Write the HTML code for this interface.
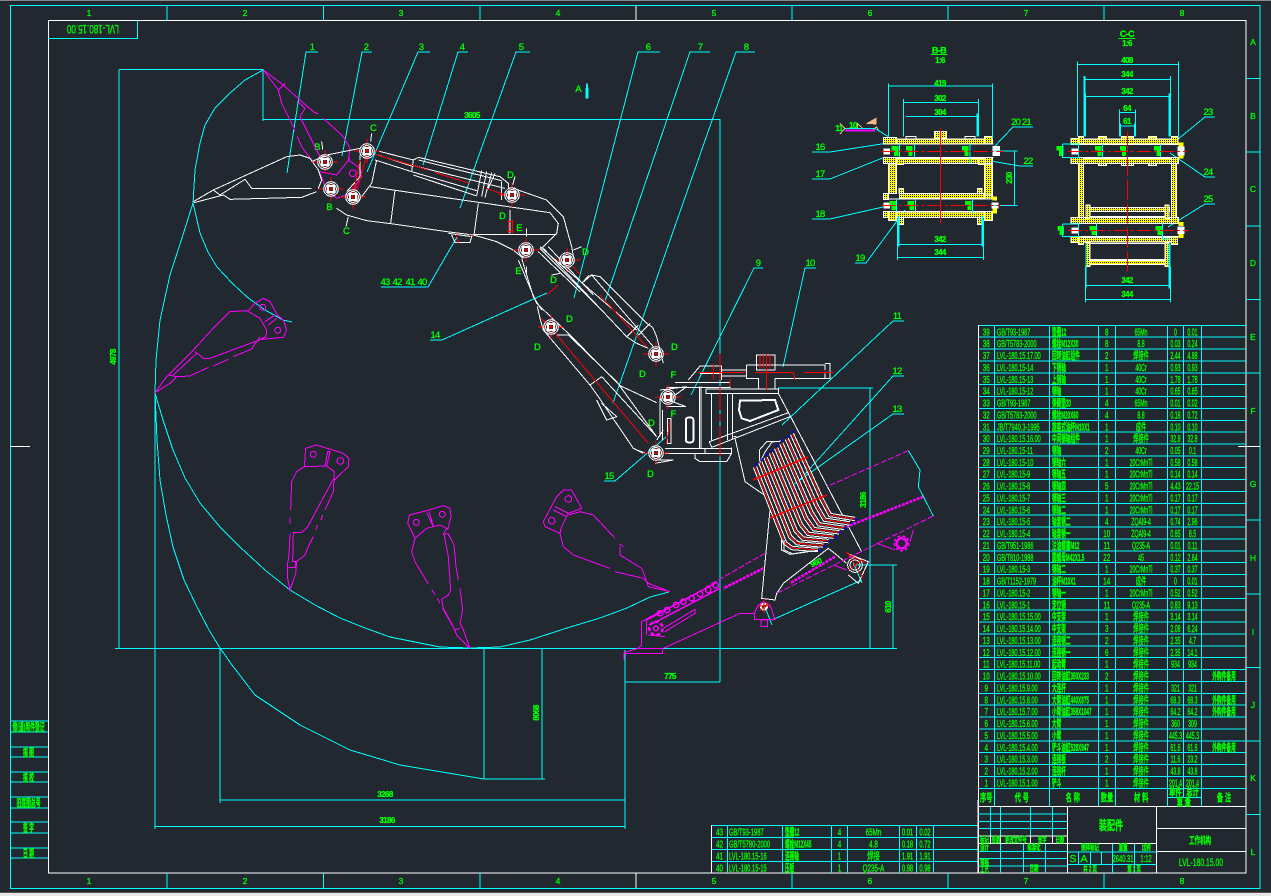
<!DOCTYPE html>
<html><head><meta charset="utf-8"><title>LVL-180.15.00</title>
<style>
html,body{margin:0;padding:0;background:#212830;overflow:hidden}
svg{display:block;shape-rendering:crispEdges}
svg *{vector-effect:non-scaling-stroke}
text{fill:#0f0;stroke:#0f0;stroke-width:.3;font:10.5px "Liberation Sans","Noto Sans CJK SC",sans-serif}
.mid text,text.mid{text-anchor:middle}
.b text,text.b{font-weight:bold}
.s{font-size:8px;font-weight:bold;text-anchor:middle;letter-spacing:-.6px}
.l{font-size:9.5px;text-anchor:middle;letter-spacing:-.8px}
.n{font-size:8.5px;text-anchor:middle}
.w{stroke:#fff;fill:none}
.c{stroke:#0ff;fill:none}
.r{stroke:#f00;fill:none}
.rd{stroke:#f00;fill:none;stroke-dasharray:14 3 3 3}
.m{stroke:#f0f;fill:none}
.md{stroke:#f0f;fill:none;stroke-dasharray:6 2}
.th{stroke:#f0f;fill:none;stroke-width:2.5;stroke-dasharray:3 1}
.h{fill:url(#h);stroke:#fff}
.gf{fill:#0f0;stroke:none}
</style></head><body>
<svg xmlns="http://www.w3.org/2000/svg" width="1271" height="896" viewBox="0 0 1271 896">
<defs>
<pattern id="h" width="6" height="6" patternUnits="userSpaceOnUse"><rect width="6" height="6" fill="#ffff00"/><rect width="3" height="3" fill="#2a2c20"/></pattern>
<g id="pin"><path d="M-13 0H13M0-12V12" class="r"/><circle r="7.3" class="w"/><circle r="5.4" class="w"/><rect x="-3.5" y="-3.5" width="7" height="7" class="w"/><rect x="-2.5" y="-2.5" width="5" height="5" class="w"/></g>
<path id="pp" fill="none" d="M755 467L785 543 792 548 818 550M760.3 462.3L790.3 536.9 797.4 543.3 823.3 545.6M765.6 457.6L795.6 530.7 802.9 538.6 828.6 541.1M770.9 452.9L800.9 524.6 808.3 533.9 833.9 536.7M776.1 448.1L806.1 518.4 813.7 529.1 839.1 532.3M781.4 443.4L811.4 512.3 819.1 524.4 844.4 527.9M786.7 438.7L816.7 506.1 824.6 519.7 849.7 523.4M792 434L822 500 830 515 855 519"/>
</defs>
<rect width="1271" height="896" fill="#212830"/>
<rect width="1271" height="1" fill="#8a8a8a"/>
<rect y="892" width="1271" height="1" fill="#555"/><rect y="893" width="1271" height="3" fill="#e6e6e6"/>

<!-- frame -->
<rect x="10.5" y="5.5" width="1249.5" height="883" class="c"/>
<rect x="48.5" y="20.5" width="1197.5" height="852.5" class="w"/>
<path class="c" d="M167 5V20M323.5 5V20M480 5V20M792 5V20M948 5V20M1104 5V20M167 873V888M323.5 873V888M480 873V888M792 873V888M948 873V888M1104 873V888M1246 78.5H1260M1246 152H1260M1246 226H1260M1246 299.5H1260M1246 373H1260M1246 520H1260M1246 594H1260M1246 667.5H1260M1246 741H1260M1246 814.5H1260"/>
<path class="w" d="M636 5V20M636 873V888M10 446.5H30M1238 446.5H1260"/>
<g class="n"><text class="n" x="89" y="16">1</text><text class="n" x="245" y="16">2</text><text class="n" x="401" y="16">3</text><text class="n" x="558" y="16">4</text><text class="n" x="714" y="16">5</text><text class="n" x="870" y="16">6</text><text class="n" x="1026" y="16">7</text><text class="n" x="1182" y="16">8</text>
<text class="n" x="89" y="884">1</text><text class="n" x="245" y="884">2</text><text class="n" x="401" y="884">3</text><text class="n" x="558" y="884">4</text><text class="n" x="714" y="884">5</text><text class="n" x="870" y="884">6</text><text class="n" x="1026" y="884">7</text><text class="n" x="1182" y="884">8</text>
<text class="n" x="1253" y="45">A</text><text class="n" x="1253" y="119">B</text><text class="n" x="1253" y="192">C</text><text class="n" x="1253" y="266">D</text><text class="n" x="1253" y="340">E</text><text class="n" x="1253" y="414">F</text><text class="n" x="1253" y="487">G</text><text class="n" x="1253" y="561">H</text><text class="n" x="1253" y="635">I</text><text class="n" x="1253" y="708">J</text><text class="n" x="1253" y="781">K</text><text class="n" x="1253" y="855">L</text></g>

<!-- top-left stamp -->
<path class="c" d="M48 38.5H137.5V20.5"/>
<g transform="translate(93,29.5) rotate(180) scale(.67,1)"><text class="mid" y="4.5" x="0" style="font-size:12px">LVL-180.15.00</text></g>

<!-- left strip -->
<path class="c" d="M10 721H48M10 732H48M10 747H48M10 757H48M10 772H48M10 782H48M10 797H48M10 808H48M10 822H48M10 833H48M10 848H48M10 858H48"/>
<g class="mid b" transform="translate(28.5,0) scale(.46,1)"><text y="730.5">借(通)用件登记</text><text y="756">描 图</text><text y="781">描 校</text><text y="806.5">旧底图总号</text><text y="831.5">签 字</text><text y="857">日 期</text></g>

<!-- main cyan dims -->
<path class="c" d="M119 69.5H263V121M119 69.5V648M263 119.5H720V682M625 682H720M625 650V829M115 648.5H897M155 390V829M155 826.5H625M220 648V803M220 800H625M484 648V779M484 779H545M542 648V779M778 388H873M870 388V648M853 565H897M893 565V648"/>
<!-- arcs -->
<g class="c">
<polyline points="263,70 245,80 230,93 215,108 205,125 200,143 195,170 193,203 182,238 170,275 160,320 156,360 155,393 157,440 160,480 166,515 173,547 184,580 197,607 209,630 220,648 232,665 255,695 300,725 350,750 400,765 484,779"/>
<polyline points="193,203 197,220 200,233 208,252 217,267 232,283 247,297 265,310 283,320 292,322"/>
<polyline points="155,393 163,420 173,450 185,478 200,503 220,527 240,547 265,570 290,590 315,605 340,618 365,628 390,637 415,642 440,647 470,648 500,647 530,640 567,628 600,618 627,608 650,597 669,592"/>
<polyline points="772,620 862,580"/>
<polyline points="765,607 772,625"/>
<polyline points="853,562 862,583"/>
<!-- leaders -->
<polyline points="287,173 306,52 318,52"/><polyline points="342,156 362,52 372,52"/><polyline points="367,172 418,52 430,52"/><polyline points="423,165 458,52 468,52"/><polyline points="460,208 516,52 530,52"/>
<polyline points="574,298 638,52 660,52"/><polyline points="605,301 690,52 710,52"/><polyline points="613,403 736,52 755,52"/>
<polyline points="691,395 754,268 763,268"/><polyline points="783,367 805,268 816,268"/><polyline points="782,425 893,321 904,321"/><polyline points="797,483 893,376 904,376"/><polyline points="793,485 893,414 904,414"/>
<polyline points="430,340 442,340 547,293"/><polyline points="604,481 615,481 666,437"/><polyline points="381,287 428,287 457,237"/>
<polyline points="812,152 830,152 888,143"/><polyline points="812,179 830,179 885,157"/><polyline points="812,219 830,219 883,207"/><polyline points="855,263 866,263 905,210"/>
<polyline points="1033,127 1013,127 993,148"/><polyline points="1033,166 1020,166 973,158"/><polyline points="1215,117 1205,117 1177,140"/><polyline points="1215,177 1205,177 1170,153"/><polyline points="1215,204 1205,204 1168,227"/>
</g>
<!-- dim/leader text -->
<g>
<text class="l" x="312" y="50">1</text><text class="l" x="366" y="50">2</text><text class="l" x="421" y="50">3</text><text class="l" x="462" y="50">4</text><text class="l" x="521" y="50">5</text><text class="l" x="648" y="50">6</text><text class="l" x="700" y="50">7</text><text class="l" x="746" y="50">8</text>
<text class="l" x="758" y="266">9</text><text class="l" x="810" y="266">10</text><text class="l" x="897" y="319">11</text><text class="l" x="897" y="374">12</text><text class="l" x="897" y="412">13</text><text class="l" x="435" y="338">14</text><text class="l" x="609" y="479">15</text>
<text class="l" x="385" y="285">43</text><text class="l" x="397" y="285">42</text><text class="l" x="410" y="285">41</text><text class="l" x="422" y="285">40</text>
<text class="l" x="820" y="150">16</text><text class="l" x="820" y="177">17</text><text class="l" x="820" y="217">18</text><text class="l" x="860" y="261">19</text><text class="l" x="1021" y="125">20 21</text><text class="l" x="1028" y="164">22</text><text class="l" x="1208" y="115">23</text><text class="l" x="1208" y="175">24</text><text class="l" x="1208" y="202">25</text>
<text class="s" x="472" y="118">3605</text><text class="s" x="670" y="679">775</text><text class="s" x="385" y="797">3268</text><text class="s" x="387" y="823">3186</text>
<text class="s" transform="translate(116,357) rotate(-90)">4978</text><text class="s" transform="translate(539,713) rotate(-90)">8068</text><text class="s" transform="translate(866,500) rotate(-90)">3186</text><text class="s" transform="translate(891,607) rotate(-90)">610</text><text class="s" transform="translate(817,565) rotate(-25)">960</text>
<text class="l" x="578" y="92">A</text>
<text class="l" x="373" y="131">C</text><text class="l" x="317" y="150">B</text><text class="l" x="329" y="210">B</text><text class="l" x="346" y="234">C</text><text class="l" x="510" y="178">D</text><text class="l" x="502" y="219">D</text><text class="l" x="519" y="231">E</text><text class="l" x="518" y="274">E</text><text class="l" x="585" y="255">D</text><text class="l" x="553" y="283">D</text><text class="l" x="569" y="322">D</text><text class="l" x="537" y="350">D</text><text class="l" x="674" y="350">D</text><text class="l" x="642" y="377">D</text><text class="l" x="673" y="378">F</text><text class="l" x="673" y="417">F</text><text class="l" x="651" y="426">D</text><text class="l" x="650" y="477">D</text>
</g>
<path d="M587 83L588 90V98L586 98V90Z" fill="#0ff" stroke="#0ff"/>

<!-- arm: zoom3 coords -->
<g transform="translate(180,60) scale(.33333)">
<g class="m">
<polyline points="250,30 310,75 360,120 400,155"/><polyline points="400,155 415,162" /><polyline points="430,175 490,230 510,265 505,300 540,325 545,350 525,380"/>
<polyline points="250,30 295,90 305,130 340,200 345,215"/><polyline points="352,230 365,260 395,300"/><polyline points="295,90 315,70"/>
<polyline points="360,170 375,145 355,125"/><polyline points="360,170 395,240 420,290"/>
<polyline points="420,340 440,390 470,415 510,400 530,380"/><polyline points="420,335 470,345 510,295"/>
<circle cx="518" cy="340" r="10"/>
</g>
<g class="w">
<polyline points="40,425 100,390 320,290 360,285 390,295 415,330 425,360 415,385"/>
<polyline points="42,428 130,405 150,418 365,412 410,395"/>
<polyline points="100,390 120,405 195,358 215,385 395,385"/>
<polyline points="395,305 440,285 540,265"/>
<polyline points="590,300 575,370 530,430"/><polyline points="540,285 540,350 500,395"/>
<polyline points="470,445 500,465 560,482 640,492 800,515 880,525 950,545 1000,570 1030,595"/>
<polyline points="570,380 1110,458 1135,490 1130,520 1085,565"/>
<path d="M880,523H1130M645,390L632,490M895,430L882,525"/>
<path d="M590,272L700,300M595,285L700,320M585,300L695,335"/>
<polyline points="695,335 700,300 715,292 960,350 985,370 985,385"/>
<path d="M695,335L890,392M700,345L890,408M715,300L965,362M705,318L975,385"/>
<path d="M905,332L890,408M920,335L905,410M935,338L915,412M945,340L925,385M965,365L965,420"/>
<polyline points="1000,385 1100,420 1150,470 1175,560 1183,605"/>
<polyline points="805,520 875,530 870,547 825,547 815,525"/>
<path d="M1040,505V530M1040,620V640M990,450V520M425,245L428,268M505,470L498,500M575,220L572,245M1005,350L998,375"/>
<polyline points="1025,595 1060,710 1085,750"/>
<path d="M1080,565L1260,745M1075,575L1200,695M1105,560L1240,705M1140,640L1115,645M1180,570L1205,560"/>
</g>
<g class="r">
<path d="M585,283L745,330M765,338L870,370M920,385L990,410M560,285L530,395M540,300L520,400M985,478V520M997,478V520M982,485H1000M982,515H1000M1100,705L1135,675M830,520L835,550M870,522L872,530"/>
</g>
</g>
<use href="#pin" x="325" y="162"/><use href="#pin" x="331" y="189"/><use href="#pin" x="367" y="151"/><use href="#pin" x="353" y="197"/><use href="#pin" x="512" y="195"/><use href="#pin" x="526" y="250"/><use href="#pin" x="567" y="260"/>

<!-- boom/frame/conveyor: zoom4 coords -->
<g transform="translate(500,240) scale(.33333)">
<g class="w">
<polyline points="55,60 110,190 210,285 360,437 470,488"/>
<polyline points="245,130 275,105 300,110 440,250 458,262 470,290 490,370"/>
<path d="M130,25L380,290 410,310 445,325M120,20L410,270M275,105L460,320M245,130L268,105M380,290L415,255M415,285L450,250"/>
<polyline points="112,200 120,235 130,270 270,435 295,470 400,625 430,640"/>
<path d="M170,285H205L350,425 470,590M270,435L305,410M305,410L470,590M290,480L320,540 350,530 305,490"/>
<path d="M525,428H690V442H500M618,447H835V460H618V447M598,440V625M603,440V625M635,460V600M682,460V600M697,460V595"/>
<polyline points="565,420 600,378 665,378 665,420"/><path d="M600,400H665M665,390H740M665,408H740"/>
<path d="M740,375H975V415H825M740,375V415H775V445M825,415V445M975,370H990V415H975M770,345H825V390H770Z"/>
<polygon points="720,482 825,480 835,510 750,543 725,535 717,510" stroke-width="2"/>
<rect x="558" y="533" width="22" height="74" rx="6" stroke-width="2"/>
<path d="M628,605L865,518M635,622L870,530M628,605L635,622M700,590L710,590"/>
<path d="M495,625H695M495,640H695V622M615,625V640"/>
<polyline points="585,640 585,655 600,665 680,665 695,640"/>
<polyline points="835,460 1085,935"/>
<polyline points="705,595 735,725 800,770"/>
<polyline points="810,810 785,1075 825,1080 830,1060 850,1030 985,925 1010,945 1040,970"/>
<polyline points="480,450 560,440 505,480 558,500 500,500"/>
<path d="M480,475V590M488,510V600"/>
<polyline points="780,680 778,630 800,605 840,605"/>
<polyline points="845,900 845,930 870,943 950,930"/>
<path d="M503,600V610L513,610V535H503Z" />
<path d="M470,600L490,570M410,630L440,640M470,660H520L465,670"/>
<polyline points="1040,940 1105,965 1075,1030 1045,1005"/>
<circle cx="1065" cy="975" r="15"/><circle cx="1065" cy="975" r="22"/>
</g>
<g class="r">
<path d="M170,285L445,610M220,80L240,105M300,165L440,320M125,235L170,285M595,397H735M765,397H880L885,420M910,397H1000M975,390V400M640,370V420M690,415V440M660,340V420M660,440V510M660,520V545M660,558V650M800,340V452M780,345V385M790,345V385M810,345V385M510,540L500,610M1040,940L1100,970M1045,990L1085,960M1040,935L1090,1015"/>
</g>
<g class="m">
<polyline points="130,845 170,770 190,750 215,750 245,805"/>
<polyline points="130,845 135,860 180,880 190,920 220,945 330,985"/><polyline points="345,995 430,1015 445,1030 510,1055 445,1040 435,1010 425,985 360,945 360,920"/>
<polyline points="245,805 205,820 185,860 180,880"/><polyline points="205,825 240,815 280,825 345,895"/><polyline points="358,912 370,920"/>
<circle cx="205" cy="777" r="10"/><circle cx="155" cy="842" r="10"/><path d="M165,800L205,820M160,810L200,830"/>
<path class="md" d="M1225,632L980,740M795,940L620,1040M1300,828L830,1060"/>
<path d="M1240,870L1230,905M1130,910L1185,930M1000,975L1040,990"/>
<circle cx="1205" cy="910" r="15" stroke-width="2.5"/><circle cx="1205" cy="910" r="22" stroke-width="1.5" stroke-dasharray="3 2"/>
</g>
<path class="th" d="M1270,770L1040,860M790,985L670,1045M1005,950L870,1030"/>
<polyline class="c" points="1225,632 1260,690 1255,740 1300,828"/>
</g>
<use href="#pin" x="551" y="327"/><use href="#pin" x="656" y="354"/><use href="#pin" x="668" y="397"/><use href="#pin" x="656" y="453"/>

<!-- chain + lower lug: last zoom coords -->
<g transform="translate(620,570) scale(.33333)" class="m">
<path d="M65,155V225L55,235H128V250H12V270M12,248L55,235M65,155L120,125"/>
<path d="M80,150L285,40M90,165L300,55" stroke-width="1.5"/>
<g stroke-width="1.5"><circle cx="120" cy="130" r="8"/><circle cx="141" cy="120" r="8"/><circle cx="168" cy="105" r="8"/><circle cx="190" cy="95" r="8"/><circle cx="215" cy="85" r="8"/><circle cx="240" cy="72" r="8"/><circle cx="265" cy="60" r="8"/><circle cx="287" cy="46" r="8"/></g>
<circle cx="108" cy="175" r="20" stroke-width="2.5" stroke-dasharray="4 2"/><circle cx="108" cy="175" r="7" stroke-width="1.5"/>
<path d="M130,175L225,118V130L135,185M85,195L135,200M80,150V195"/>
<path d="M130,235L360,130H403V148H465L450,105 430,95 415,105 403,130"/>
<rect x="423" y="150" width="20" height="20"/>
</g>
<g transform="translate(620,570) scale(.33333)">
<circle cx="432" cy="110" r="9" class="w" stroke-width="2"/><path class="r" d="M415,108H450M432,85V130M420,122L445,98"/>
</g>

<!-- pipes -->
<use href="#pp" stroke="#fff" stroke-width="4.4"/><use href="#pp" stroke="#212830" stroke-width="2.4"/><use href="#pp" stroke="#f00" stroke-width="1"/>
<path class="r" stroke-width="1.5" d="M753 480L808 457M770 518L827 495"/>
<path class="w" d="M760 462L765 452 772 442 782 441M784 540V550L793 554 820 550"/>
<path d="M755 466l2-3M761 461l2-3M766 456l2-3M771 452l2-3M776 447l2-3M781 442l2-3M787 438l2-3M792 433l2-3M855 519l3 1M850 523l3 1M844 528l3 1M839 532l3 1M834 537l3 1M828 541l3 1M823 546l3 1M818 550l3 1" stroke="#00f" stroke-width="1.5"/>

<!-- BB & CC sections: zoom5 coords -->
<g transform="translate(830,20) scale(.33333)">
<g class="h">
<rect x="160" y="352" width="40" height="20"/><rect x="200" y="357" width="263" height="15"/><rect x="463" y="350" width="25" height="22"/>
<rect x="160" y="413" width="40" height="18"/><rect x="200" y="415" width="20" height="18"/><rect x="220" y="415" width="225" height="15"/><rect x="445" y="415" width="20" height="18"/><rect x="465" y="413" width="23" height="18"/>
<rect x="176" y="432" width="24" height="88"/><rect x="463" y="432" width="25" height="100"/>
<rect x="208" y="520" width="255" height="16"/><rect x="207" y="505" width="14" height="15"/><rect x="442" y="505" width="14" height="15"/><rect x="160" y="520" width="15" height="18"/><rect x="463" y="525" width="25" height="12"/>
<rect x="200" y="576" width="263" height="16"/><rect x="160" y="575" width="15" height="18"/><rect x="175" y="575" width="25" height="27"/><rect x="463" y="575" width="25" height="27"/><rect x="207" y="592" width="14" height="22"/><rect x="442" y="592" width="14" height="22"/>
<rect x="313" y="335" width="37" height="20"/>
<rect x="723" y="355" width="22" height="18"/><rect x="745" y="350" width="16" height="22"/><rect x="761" y="357" width="263" height="15"/><rect x="1024" y="350" width="20" height="22"/>
<rect x="805" y="350" width="25" height="7"/><rect x="875" y="350" width="35" height="7"/><rect x="955" y="350" width="25" height="7"/>
<rect x="723" y="413" width="37" height="18"/><rect x="760" y="415" width="265" height="15"/><rect x="1025" y="413" width="20" height="18"/>
<rect x="805" y="430" width="25" height="7"/><rect x="875" y="430" width="35" height="7"/><rect x="955" y="430" width="25" height="7"/>
<rect x="745" y="431" width="15" height="161"/><rect x="1024" y="431" width="15" height="161"/>
<rect x="723" y="592" width="38" height="18"/><rect x="761" y="592" width="263" height="18"/><rect x="1024" y="592" width="22" height="18"/>
<rect x="723" y="650" width="22" height="18"/><rect x="745" y="650" width="16" height="24"/><rect x="761" y="652" width="263" height="14"/><rect x="1024" y="650" width="18" height="24"/>
<rect x="768" y="562" width="250" height="12"/><rect x="768" y="722" width="250" height="12"/><rect x="768" y="555" width="12" height="40"/><rect x="1005" y="555" width="12" height="40"/><rect x="768" y="668" width="12" height="72"/><rect x="1005" y="668" width="12" height="72"/>
</g>
<g class="w">
<path d="M160,372H490M160,412H490M160,537H500M160,575H500M228,356V349H258V356M405,356V349H435V356M723,373H1045M723,413H1045M723,610H1045M723,650H1045"/>
<path d="M780,575H1005M780,590H1005M780,670H1005M780,718H1005"/>
</g>
<g fill="#fff" stroke="none">
<rect x="160" y="385" width="20" height="18"/><rect x="488" y="378" width="22" height="30"/><rect x="160" y="548" width="20" height="18"/><rect x="485" y="548" width="20" height="18"/>
<rect x="725" y="385" width="20" height="18"/><rect x="1042" y="380" width="22" height="26"/><rect x="725" y="622" width="20" height="18"/><rect x="1042" y="620" width="22" height="22"/>
</g>
<g fill="#ff0" stroke="none"><rect x="487" y="530" width="14" height="12"/><rect x="487" y="566" width="14" height="14"/><rect x="1045" y="368" width="15" height="12"/><rect x="1045" y="406" width="15" height="10"/><rect x="1045" y="606" width="15" height="12"/><rect x="1045" y="642" width="15" height="12"/></g>
<g class="gf">
<path d="M185,378H205V408H192V392H185Z"/><path d="M228,378H248V408H235V392H228Z"/><path d="M396,378H416V408H403V392H396Z"/>
<path d="M178,543H198V570H185V555H178Z"/><path d="M232,543H252V570H239V555H232Z"/><path d="M405,543H425V570H412V555H405Z"/>
<path d="M680,378H700V408H687V392H680Z"/><path d="M795,378H815V408H802V392H795Z"/><path d="M870,378H888V408H876V392H870Z"/><path d="M972,378H992V408H979V392H972Z"/>
<path d="M682,618H702V645H689V632H682Z"/><path d="M778,618H798V645H785V632H778Z"/><path d="M976,618H996V645H983V632H976Z"/>
</g>
<g class="c">
<path d="M208,372V412M253,372V412M420,372V430M200,537V575M257,537V575M428,537V580M698,372H745V412H698V372M818,372V412M992,372V412M698,612H745V650H698V612M800,610V650M998,607V657H1018"/>
<path d="M175,190V350M488,190V355M175,198H488M220,237V350M445,237V350M220,247H445M228,290H440M443,280V350M490,393H563M490,556H563M553,393V556"/>
<path d="M205,590V680M458,590V680M205,673H458M203,600V720M460,600V720M203,712H460"/>
<path d="M743,124V350M1045,124V350M743,133H1045M764,168V350M1022,168V350M764,178H1022M766,220V350M1018,220V350M766,229H1018M868,268V350M916,268V350M868,278H916M872,310V350M914,310V350M872,318H914"/>
<path d="M768,670V805M1018,670V805M768,796H1018M766,740V848M1022,740V848M766,838H1022"/>
</g>
<path class="c" stroke-width="2" d="M443,280V350M205,590V680M458,590V680M764,168V350M1018,220V350M1018,670V805"/>
<path class="rd" d="M155,394H520M155,556H510M714,394H1070M714,631H1075"/>
<path class="r" d="M331,325V610"/><path class="r" stroke-dasharray="20 4" d="M892,335V755"/>
<path stroke="#0f0" d="M303,103H353M865,55H915"/>
<path fill="#f5b985" stroke="#f5b985" d="M112,310L138,295V312Z"/>
<path stroke="#f5b985" fill="none" d="M30,310L45,325 30,342M82,325L82,310 98,325ZM128,330L140,320 145,332"/>
<path class="c" d="M45,325H135L175,350"/><path class="m" stroke-width="2" d="M45,331H135"/>
</g>
<g>
<text class="s" x="939" y="53.5" style="font-size:9px">B-B</text><text class="s" x="940" y="63">1:6</text>
<text class="s" x="1127" y="37" style="font-size:9px">C-C</text><text class="s" x="1127" y="46">1:6</text>
<text class="s" x="940" y="86">419</text><text class="s" x="940" y="101">302</text><text class="s" x="940" y="115">304</text><text class="s" x="940" y="242">342</text><text class="s" x="940" y="255">344</text>
<text class="s" transform="translate(1012,178) rotate(-90)">230</text>
<text class="s" x="1127" y="63">408</text><text class="s" x="1127" y="77">344</text><text class="s" x="1127" y="94">342</text><text class="s" x="1127" y="111">64</text><text class="s" x="1127" y="124">61</text><text class="s" x="1127" y="283">342</text><text class="s" x="1127" y="297">344</text>
<text class="s" x="839" y="131">11</text><text class="s" x="853" y="128">10</text>
</g>

<!-- parts table -->
<path class="c" d="M978 325.3H1246M978 337.2H1246M978 349H1246M978 360.9H1246M978 372.8H1246M978 384.7H1246M978 396.5H1246M978 408.4H1246M978 420.3H1246M978 432.1H1246M978 444H1246M978 455.9H1246M978 467.7H1246M978 479.6H1246M978 491.5H1246M978 503.4H1246M978 515.2H1246M978 527.1H1246M978 539H1246M978 550.8H1246M978 562.7H1246M978 574.6H1246M978 586.4H1246M978 598.3H1246M978 610.2H1246M978 622.1H1246M978 633.9H1246M978 645.8H1246M978 657.7H1246M978 669.5H1246M978 681.4H1246M978 693.3H1246M978 705.1H1246M978 717H1246M978 728.9H1246M978 740.8H1246M978 752.6H1246M978 764.5H1246M978 776.4H1246M978 788.3H1246M1167 797.3H1201M994.3 325V806.5M1049.3 325V806.5M1098.3 325V806.5M1115.3 325V806.5M1167.3 325V806.5M1183.7 325V797.3M1201.3 325V806.5"/>
<path class="w" d="M978.3 325V873M978 806.7H1246"/>
<g class="mid" transform="translate(986.3,0) scale(.6,1)"><text y="335.3">39</text><text y="347.2">38</text><text y="359">37</text><text y="370.9">36</text><text y="382.8">35</text><text y="394.7">34</text><text y="406.5">33</text><text y="418.4">32</text><text y="430.3">31</text><text y="442.1">30</text><text y="454">29</text><text y="465.9">28</text><text y="477.7">27</text><text y="489.6">26</text><text y="501.5">25</text><text y="513.4">24</text><text y="525.2">23</text><text y="537.1">22</text><text y="549">21</text><text y="560.8">20</text><text y="572.7">19</text><text y="584.6">18</text><text y="596.4">17</text><text y="608.3">16</text><text y="620.2">15</text><text y="632.1">14</text><text y="643.9">13</text><text y="655.8">12</text><text y="667.7">11</text><text y="679.5">10</text><text y="691.4">9</text><text y="703.3">8</text><text y="715.1">7</text><text y="727">6</text><text y="738.9">5</text><text y="750.8">4</text><text y="762.6">3</text><text y="774.5">2</text><text y="786.4">1</text></g>
<g transform="translate(997,0) scale(.53,1)"><text y="335.3">GB/T93-1987</text><text y="347.2">GB/T5783-2000</text><text y="359">LVL-180.15.17.00</text><text y="370.9">LVL-180.15-14</text><text y="382.8">LVL-180.15-13</text><text y="394.7">LVL-180.15-12</text><text y="406.5">GB/T93-1987</text><text y="418.4">GB/T5783-2000</text><text y="430.3">JB/T7940.3-1995</text><text y="442.1">LVL-180.15.16.00</text><text y="454">LVL-180.15-11</text><text y="465.9">LVL-180.15-10</text><text y="477.7">LVL-180.15-9</text><text y="489.6">LVL-180.15-8</text><text y="501.5">LVL-180.15-7</text><text y="513.4">LVL-180.15-6</text><text y="525.2">LVL-180.15-5</text><text y="537.1">LVL-180.15-4</text><text y="549">GB/T951-1986</text><text y="560.8">GB/T810-1988</text><text y="572.7">LVL-180.15-3</text><text y="584.6">GB/T1152-1979</text><text y="596.4">LVL-180.15-2</text><text y="608.3">LVL-180.15-1</text><text y="620.2">LVL-180.15.15.00</text><text y="632.1">LVL-180.15.14.00</text><text y="643.9">LVL-180.15.13.00</text><text y="655.8">LVL-180.15.12.00</text><text y="667.7">LVL-180.15.11.00</text><text y="679.5">LVL-180.15.10.00</text><text y="691.4">LVL-180.15.9.00</text><text y="703.3">LVL-180.15.8.00</text><text y="715.1">LVL-180.15.7.00</text><text y="727">LVL-180.15.6.00</text><text y="738.9">LVL-180.15.5.00</text><text y="750.8">LVL-180.15.4.00</text><text y="762.6">LVL-180.15.3.00</text><text y="774.5">LVL-180.15.2.00</text><text y="786.4">LVL-180.15.1.00</text></g>
<g class="b" transform="translate(1052,0) scale(.44,1)"><text y="335.3">垫圈12</text><text y="347.2">螺栓M12X30</text><text y="359">回转油缸组件</text><text y="370.9">下销轴</text><text y="382.8">上销轴</text><text y="394.7">销轴</text><text y="406.5">弹簧垫20</text><text y="418.4">螺栓M20X60</text><text y="430.3">旋盖式油杯M10X1</text><text y="442.1">中间销轴组件</text><text y="454">销轴</text><text y="465.9">销轴六</text><text y="477.7">销轴五</text><text y="489.6">销轴四</text><text y="501.5">销轴三</text><text y="513.4">销轴二</text><text y="525.2">轴套销二</text><text y="537.1">轴套销一</text><text y="549">注油螺塞M12</text><text y="560.8">圆螺母M42X1.5</text><text y="572.7">销轴二</text><text y="584.6">油杯M10X1</text><text y="596.4">销轴一</text><text y="608.3">定位销</text><text y="620.2">中支架</text><text y="632.1">中支架</text><text y="643.9">连接销二</text><text y="655.8">连接销一</text><text y="667.7">起动臂</text><text y="679.5">回转油缸350X233</text><text y="691.4">大连杆</text><text y="703.3">大臂油缸440X875</text><text y="715.1">小臂油缸358X1047</text><text y="727">大臂</text><text y="738.9">小臂</text><text y="750.8">铲斗油缸528X947</text><text y="762.6">连接板</text><text y="774.5">连接杆</text><text y="786.4">铲斗</text></g>
<g class="mid" transform="translate(1106.8,0) scale(.6,1)"><text y="335.3">8</text><text y="347.2">8</text><text y="359">2</text><text y="370.9">1</text><text y="382.8">1</text><text y="394.7">1</text><text y="406.5">4</text><text y="418.4">4</text><text y="430.3">1</text><text y="442.1">1</text><text y="454">2</text><text y="465.9">1</text><text y="477.7">1</text><text y="489.6">5</text><text y="501.5">1</text><text y="513.4">1</text><text y="525.2">4</text><text y="537.1">10</text><text y="549">11</text><text y="560.8">22</text><text y="572.7">1</text><text y="584.6">14</text><text y="596.4">1</text><text y="608.3">11</text><text y="620.2">1</text><text y="632.1">3</text><text y="643.9">2</text><text y="655.8">6</text><text y="667.7">1</text><text y="679.5">2</text><text y="691.4">1</text><text y="703.3">1</text><text y="715.1">1</text><text y="727">1</text><text y="738.9">1</text><text y="750.8">1</text><text y="762.6">2</text><text y="774.5">1</text><text y="786.4">1</text></g>
<g class="mid" transform="translate(1141,0) scale(.5,1)"><text y="335.3">65Mn</text><text y="347.2">8.8</text><text y="359">焊接件</text><text y="370.9">40Cr</text><text y="382.8">40Cr</text><text y="394.7">40Cr</text><text y="406.5">65Mn</text><text y="418.4">8.8</text><text y="430.3">成件</text><text y="442.1">焊接件</text><text y="454">40Cr</text><text y="465.9">20CrMnTi</text><text y="477.7">20CrMnTi</text><text y="489.6">20CrMnTi</text><text y="501.5">20CrMnTi</text><text y="513.4">20CrMnTi</text><text y="525.2">ZQAl9-4</text><text y="537.1">ZQAl9-4</text><text y="549">Q235-A</text><text y="560.8">45</text><text y="572.7">20CrMnTi</text><text y="584.6">成件</text><text y="596.4">20CrMnTi</text><text y="608.3">Q235-A</text><text y="620.2">焊接件</text><text y="632.1">焊接件</text><text y="643.9">焊接件</text><text y="655.8">焊接件</text><text y="667.7">焊接件</text><text y="679.5">焊接件</text><text y="691.4">焊接件</text><text y="703.3">焊接件</text><text y="715.1">焊接件</text><text y="727">焊接件</text><text y="738.9">焊接件</text><text y="750.8">焊接件</text><text y="762.6">焊接件</text><text y="774.5">焊接件</text><text y="786.4">焊接件</text></g>
<g class="mid" transform="translate(1175.5,0) scale(.5,1)"><text y="335.3">0</text><text y="347.2">0.03</text><text y="359">2.44</text><text y="370.9">0.93</text><text y="382.8">1.78</text><text y="394.7">0.65</text><text y="406.5">0.01</text><text y="418.4">0.18</text><text y="430.3">0.10</text><text y="442.1">32.8</text><text y="454">0.05</text><text y="465.9">0.58</text><text y="477.7">0.14</text><text y="489.6">4.43</text><text y="501.5">0.17</text><text y="513.4">0.17</text><text y="525.2">0.74</text><text y="537.1">0.85</text><text y="549">0.01</text><text y="560.8">0.12</text><text y="572.7">0.37</text><text y="584.6">0</text><text y="596.4">0.52</text><text y="608.3">0.83</text><text y="620.2">3.14</text><text y="632.1">2.08</text><text y="643.9">2.35</text><text y="655.8">2.35</text><text y="667.7">934</text><text y="691.4">321</text><text y="703.3">68.3</text><text y="715.1">64.2</text><text y="727">360</text><text y="738.9">445.3</text><text y="750.8">61.6</text><text y="762.6">11.6</text><text y="774.5">43.8</text><text y="786.4">201.4</text></g>
<g class="mid" transform="translate(1192.5,0) scale(.5,1)"><text y="335.3">0.01</text><text y="347.2">0.24</text><text y="359">4.88</text><text y="370.9">0.93</text><text y="382.8">1.78</text><text y="394.7">0.65</text><text y="406.5">0.02</text><text y="418.4">0.72</text><text y="430.3">0.10</text><text y="442.1">32.8</text><text y="454">0.1</text><text y="465.9">0.58</text><text y="477.7">0.14</text><text y="489.6">22.15</text><text y="501.5">0.17</text><text y="513.4">0.17</text><text y="525.2">2.96</text><text y="537.1">8.5</text><text y="549">0.11</text><text y="560.8">2.64</text><text y="572.7">0.37</text><text y="584.6">0.01</text><text y="596.4">0.52</text><text y="608.3">9.13</text><text y="620.2">3.14</text><text y="632.1">6.24</text><text y="643.9">4.7</text><text y="655.8">14.1</text><text y="667.7">934</text><text y="691.4">321</text><text y="703.3">68.3</text><text y="715.1">64.2</text><text y="727">309</text><text y="738.9">445.3</text><text y="750.8">61.6</text><text y="762.6">23.2</text><text y="774.5">43.8</text><text y="786.4">201.4</text></g>
<g class="mid b" transform="translate(1224,0) scale(.45,1)"><text y="679.5">外购件备用</text><text y="703.3">外购件备用</text><text y="715.1">外购件备用</text><text y="750.8">外购件备用</text></g>
<g class="mid b" transform="scale(.6,1)"><text x="1643.8" y="801">序号</text><text x="1703" y="801">代 号</text><text x="1788" y="801">名 称</text><text x="1845" y="801">数量</text><text x="1902" y="801">材 料</text><text x="1959" y="795.5">单件</text><text x="1987.5" y="795.5">总计</text><text x="1973" y="805.5">重 量</text><text x="2040" y="801">备 注</text></g>

<!-- title block -->
<path class="c" d="M978 814H1067M978 821.3H1067M978 828.7H1067M978 851.3H1067M978 858.3H1067M978 866H1067M1067 852H1156M1067 864.3H1156M990.3 807V843M1000.3 807V873M1030.7 807V836M1052.3 807V843M1023.3 843V873M1045.3 843V873M1078.3 852V864M1090.3 852V864M1101.3 852V864M1112.3 843V873M1134.3 843V873"/>
<path class="w" d="M978 836H1067M978 843.3H1156M1067.3 807V873M1156.3 807V873M1156 828.3H1246M1156 851.3H1246M990.3 836V843M1000.3 836V843M1030.7 836V843M1052.3 836V843"/>
<g class="mid b" transform="scale(.55,1)"><text x="1790" y="842.5" style="font-size:8px">标记</text><text x="1811" y="842.5" style="font-size:8px">处数</text><text x="1847" y="842.5" style="font-size:8px">更改文件号</text><text x="1895" y="842.5" style="font-size:8px">签字</text><text x="1927" y="842.5" style="font-size:8px">日期</text>
<text x="1790" y="850" style="font-size:8px">设计</text><text x="1880" y="850" style="font-size:8px">标准化</text><text x="1790" y="865" style="font-size:8px">审核</text><text x="1790" y="872" style="font-size:8px">工艺</text><text x="1880" y="871" style="font-size:8px">日期</text>
<text x="1982" y="850" style="font-size:8px">图样标记</text><text x="2042" y="850" style="font-size:8px">重量</text><text x="2084" y="850" style="font-size:8px">比例</text><text x="1982" y="871.5" style="font-size:8px">共 2 页</text><text x="2062" y="871.5" style="font-size:8px">第 1 页</text>
<text x="2182" y="844" style="font-size:10px">工作机构</text></g>
<text class="mid b" transform="translate(1111,830) scale(.62,1)" style="font-size:13px">装配件</text>
<text class="mid" transform="translate(1201,866) scale(.62,1)" style="font-size:11px">LVL-180.15.00</text>
<text class="mid" x="1073" y="862">S</text><text class="mid" x="1084" y="862">A</text>
<g class="mid" transform="translate(1123,0) scale(.55,1)"><text y="862">2640.31</text></g><g class="mid" transform="translate(1146,0) scale(.55,1)"><text y="862">1:12</text></g>

<!-- lower small table -->
<path class="c" d="M711 825.3H978M711 837.7H978M711 849.7H978M711 861.7H978M727.7 825V873M782.3 825V873M831.3 825V873M847.7 825V873M899.3 825V873M916.3 825V873M933.7 825V873"/>
<path class="w" d="M711.3 825V873M978 800V873"/>
<g class="mid" transform="translate(719.5,0) scale(.6,1)"><text y="835.5">43</text><text y="847.5">42</text><text y="859.5">41</text><text y="871.5">40</text></g>
<g transform="translate(729,0) scale(.55,1)"><text y="835.5">GB/T93-1987</text><text y="847.5">GB/T5780-2000</text><text y="859.5">LVL-180.15-16</text><text y="871.5">LVL-180.15-15</text></g>
<g class="b" transform="translate(785,0) scale(.44,1)"><text y="835.5">垫圈12</text><text y="847.5">螺栓M12X45</text><text y="859.5">连接轴</text><text y="871.5">压板</text></g>
<g class="mid" transform="translate(839.5,0) scale(.6,1)"><text y="835.5">4</text><text y="847.5">4</text><text y="859.5">1</text><text y="871.5">1</text></g>
<g class="mid" transform="translate(873.5,0) scale(.6,1)"><text y="835.5">65Mn</text><text y="847.5">4.8</text><text y="859.5">焊接</text><text y="871.5">Q235-A</text></g>
<g class="mid" transform="translate(907.5,0) scale(.55,1)"><text y="835.5">0.01</text><text y="847.5">0.18</text><text y="859.5">1.91</text><text y="871.5">0.98</text></g>
<g class="mid" transform="translate(925,0) scale(.55,1)"><text y="835.5">0.02</text><text y="847.5">0.72</text><text y="859.5">1.91</text><text y="871.5">0.98</text></g>

<!-- teeth: zoom7 coords -->
<g transform="translate(140,280) scale(.33333)" class="m">
<polyline points="160,210 215,150 270,95 320,92 360,115 380,150 378,170 358,180 210,235 190,235 178,225 165,215"/>
<polyline points="360,170 335,207 280,230"/><polyline points="265,238 220,258"/><polyline points="205,262 150,288 110,290 90,310 45,338 80,290 165,205"/>
<polyline points="325,92 345,70 370,55 390,65 412,105 430,120 440,150 430,172 365,178"/>
<circle cx="368" cy="82" r="9"/><circle cx="413" cy="151" r="9"/><path d="M375,125L405,105M385,135L410,115M85,285L110,290M100,285L170,220"/>
<polyline points="493,560 497,505 530,495 610,520 627,535 625,560 583,600"/>
<circle cx="520" cy="523" r="9"/><circle cx="601" cy="543" r="10"/><path d="M555,558L563,515H570L560,558"/>
<polyline points="493,560 560,558 583,575 580,635 555,690"/><polyline points="548,705 543,720"/><polyline points="532,735 528,750"/>
<polyline points="520,770 505,800 495,825 470,845 467,880 450,930 442,890 442,855 447,825 450,760"/><polyline points="450,730 450,712"/><polyline points="452,690 455,605 470,575 493,560"/>
<polyline points="580,597 502,742 485,757 460,757 458,845 470,845"/><polyline points="445,862 465,862 467,845"/>
<polyline points="825,775 803,730 808,705 860,692 910,677 930,685 933,710 923,750"/>
<circle cx="829" cy="727" r="9"/><circle cx="907" cy="703" r="9"/><path d="M860,698L880,740M867,695L880,738"/>
<polyline points="825,775 860,745 900,735 920,745 910,762 925,762 942,795 948,860 955,900"/><polyline points="960,925 968,990 960,1030 970,1050 990,1105 950,1065 940,1040 910,985 905,958 925,945 932,930 925,830 912,762"/>
<polyline points="825,775 815,815 825,845 865,912"/><polyline points="875,928 885,945"/><polyline points="892,955 900,970"/><polyline points="908,985 945,1050 960,1045"/>
</g>
</svg>
</body></html>
